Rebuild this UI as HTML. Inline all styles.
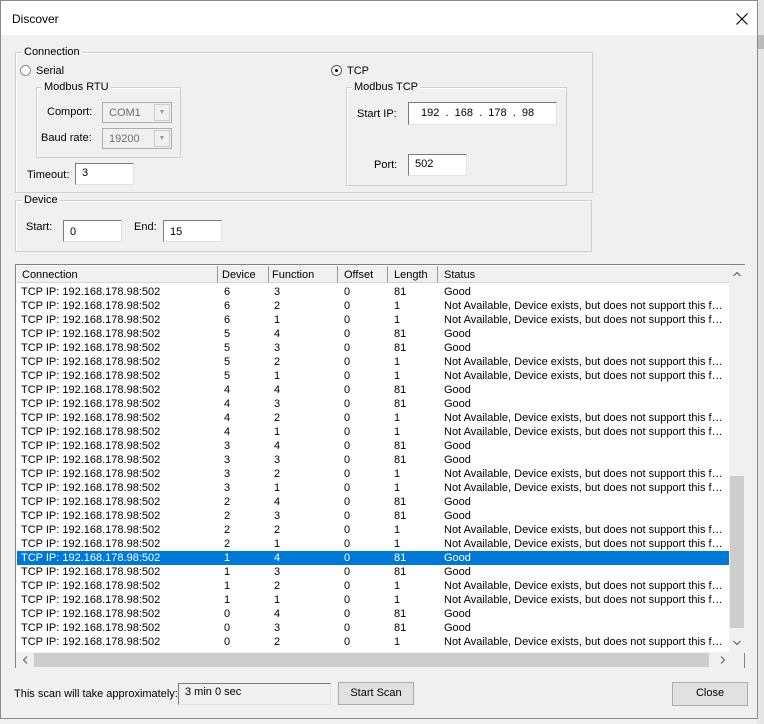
<!DOCTYPE html>
<html><head><style>
*{box-sizing:border-box;margin:0;padding:0}
body{width:764px;height:724px;overflow:hidden;background:#f0f0f0;font-family:"Liberation Sans",sans-serif;font-size:11px;color:#000;position:relative}
.a{position:absolute}
.win{left:0;top:0;width:758px;height:719px;background:#f0f0f0;border:1px solid #888}
.title{left:1px;top:1px;width:756px;height:34px;background:#fff}
.grp{position:absolute;border:1px solid #cfcfcf;box-shadow:inset 1px 1px 0 #fff}
.lg{position:absolute;background:#f0f0f0;padding:0 2px;font-size:11px}
.inp{position:absolute;background:#fff;border:1px solid #7a7a7a;border-right-color:#e3e3e3;border-bottom-color:#e3e3e3;padding:4px 0 0 6px;font-size:11px}
.dis{background:#f0f0f0;color:#6d6d6d;border:1px solid #adadad}
.btn{position:absolute;background:#e1e1e1;border:1px solid #adadad;text-align:center;font-size:11px;line-height:21px}
.row{position:absolute;left:0;width:712px;height:14px;line-height:14px;white-space:nowrap}
.row span{position:absolute;top:0}
.sel{background:#0078d7;color:#fff}
</style></head><body>
<div class="a" style="left:757px;top:0;width:7px;height:724px;background:#e6e6e6"></div>
<div class="a" style="left:757px;top:35px;width:7px;height:14px;background:#bbb"></div>
<div class="a win"></div>
<div class="a title"></div>
<div class="a" style="left:12px;top:12px;font-size:12px">Discover</div>
<svg class="a" style="left:736px;top:13px" width="12" height="12"><path d="M0.5 0.5L11.5 11.5M11.5 0.5L0.5 11.5" stroke="#000" stroke-width="1.1"/></svg>

<div class="grp" style="left:15px;top:52px;width:578px;height:141px"></div>
<div class="lg" style="left:22px;top:46px">Connection</div>
<div class="a" style="left:20px;top:65px;width:11px;height:11px;border:1px solid #888;border-radius:50%;background:#fff"></div>
<div class="a" style="left:36px;top:65px">Serial</div>
<div class="a" style="left:331px;top:65px;width:11px;height:11px;border:1px solid #555;border-radius:50%;background:#fff"><div class="a" style="left:3px;top:3px;width:3px;height:3px;background:#000;border-radius:50%"></div></div>
<div class="a" style="left:347px;top:65px">TCP</div>

<div class="grp" style="left:36px;top:87px;width:145px;height:71px"></div>
<div class="lg" style="left:42px;top:81px">Modbus RTU</div>
<div class="a" style="left:47px;top:106px">Comport:</div>
<div class="inp dis" style="left:102px;top:102px;width:70px;height:21px">COM1</div>
<div class="a" style="left:154px;top:104px;width:16px;height:17px;border:1px solid #ccc;color:#999;font-size:7px;text-align:center;line-height:16px">▼</div>
<div class="a" style="left:41px;top:132px">Baud rate:</div>
<div class="inp dis" style="left:102px;top:128px;width:70px;height:21px">19200</div>
<div class="a" style="left:154px;top:130px;width:16px;height:17px;border:1px solid #ccc;color:#999;font-size:7px;text-align:center;line-height:16px">▼</div>
<div class="a" style="left:27px;top:169px">Timeout:</div>
<div class="inp" style="left:75px;top:163px;width:59px;height:22px;padding-top:3px">3</div>

<div class="grp" style="left:346px;top:87px;width:221px;height:99px"></div>
<div class="lg" style="left:352px;top:81px">Modbus TCP</div>
<div class="a" style="left:357px;top:108px">Start IP:</div>
<div class="inp" style="left:408px;top:102px;width:149px;height:23px;padding-left:12px;white-space:pre">192  .  168  .  178  .  98</div>
<div class="a" style="left:374px;top:159px">Port:</div>
<div class="inp" style="left:408px;top:154px;width:59px;height:22px;padding-top:3px">502</div>

<div class="grp" style="left:15px;top:200px;width:577px;height:52px"></div>
<div class="lg" style="left:22px;top:194px">Device</div>
<div class="a" style="left:26px;top:221px">Start:</div>
<div class="inp" style="left:63px;top:220px;width:59px;height:22px;padding-top:5px">0</div>
<div class="a" style="left:134px;top:221px">End:</div>
<div class="inp" style="left:163px;top:220px;width:59px;height:22px;padding-top:5px">15</div>

<div class="a" style="left:15px;top:264px;width:730px;height:404px;background:#fff;border:1px solid #828282">
 <div class="a" style="left:1px;top:1px;width:712px;height:17px;background:#f0f0f0;border-bottom:1px solid #d5d5d5"></div>
 <div class="a" style="left:6px;top:4px">Connection</div>
 <div class="a" style="left:201px;top:1px;width:1px;height:16px;background:#999"></div><div class="a" style="left:206px;top:4px">Device</div>
 <div class="a" style="left:252px;top:1px;width:1px;height:16px;background:#999"></div><div class="a" style="left:256px;top:4px">Function</div>
 <div class="a" style="left:321px;top:1px;width:1px;height:16px;background:#999"></div><div class="a" style="left:328px;top:4px">Offset</div>
 <div class="a" style="left:371px;top:1px;width:1px;height:16px;background:#999"></div><div class="a" style="left:378px;top:4px">Length</div>
 <div class="a" style="left:421px;top:1px;width:1px;height:16px;background:#999"></div><div class="a" style="left:428px;top:4px">Status</div>
 <div class="a" style="left:713px;top:0;width:16px;height:388px;background:#f0f0f0"></div>
 <div class="a" style="left:714px;top:211px;width:14px;height:152px;background:#cdcdcd"></div>
 <svg class="a" style="left:717px;top:6px" width="8" height="6"><path d="M0.5 5L4 1.5L7.5 5" stroke="#555" fill="none"/></svg>
 <svg class="a" style="left:717px;top:375px" width="8" height="6"><path d="M0.5 1L4 4.5L7.5 1" stroke="#555" fill="none"/></svg>
 <div class="a" style="left:0;top:387px;width:728px;height:16px;background:#f0f0f0"></div>
 <div class="a" style="left:18px;top:388px;width:675px;height:14px;background:#cdcdcd"></div>
 <svg class="a" style="left:6px;top:391px" width="6" height="8"><path d="M5 0.5L1.5 4L5 7.5" stroke="#555" fill="none"/></svg>
 <svg class="a" style="left:704px;top:391px" width="6" height="8"><path d="M1 0.5L4.5 4L1 7.5" stroke="#555" fill="none"/></svg>
 <div id="rows" class="a" style="left:1px;top:20px;width:712px;height:366px;overflow:hidden"></div>
</div>

<div class="a" style="left:14px;top:688px">This scan will take approximately:</div>
<div class="a" style="left:178px;top:683px;width:153px;height:22px;border:1px solid #7a7a7a;border-right-color:#e3e3e3;border-bottom-color:#e3e3e3;padding:2px 0 0 6px">3 min 0 sec</div>
<div class="btn" style="left:338px;top:682px;width:76px;height:23px">Start Scan</div>
<div class="btn" style="left:672px;top:682px;width:76px;height:24px">Close</div>

<script>
var d=[[6,3],[6,2],[6,1],[5,4],[5,3],[5,2],[5,1],[4,4],[4,3],[4,2],[4,1],[3,4],[3,3],[3,2],[3,1],[2,4],[2,3],[2,2],[2,1],[1,4],[1,3],[1,2],[1,1],[0,4],[0,3],[0,2]];
var h='';
d.forEach(function(r,i){var g=r[1]>2;h+='<div class="row'+(i==19?' sel':'')+'" style="top:'+(i*14)+'px"><span style="left:4px">TCP IP: 192.168.178.98:502</span><span style="left:207px">'+r[0]+'</span><span style="left:257px">'+r[1]+'</span><span style="left:327px">0</span><span style="left:377px">'+(g?81:1)+'</span><span style="left:427px">'+(g?'Good':'Not Available, Device exists, but does not support this f…')+'</span></div>';});
document.getElementById('rows').innerHTML=h;
</script>
</body></html>
